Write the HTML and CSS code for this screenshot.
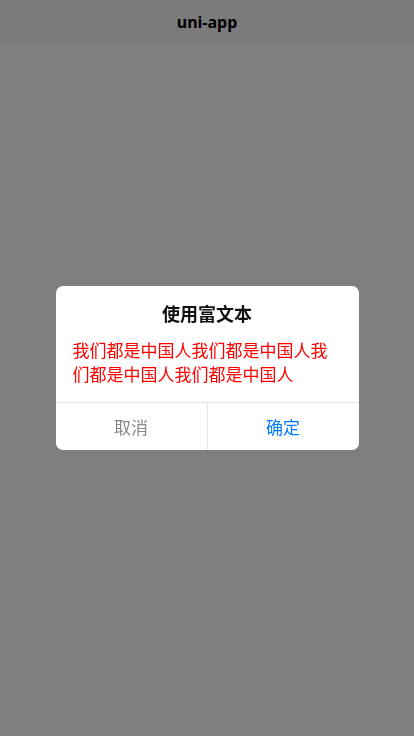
FILE: index.html
```html
<!DOCTYPE html>
<html lang="zh-CN">
<head>
<meta charset="utf-8">
<meta name="viewport" content="width=device-width, initial-scale=1">
<title>uni-app</title>
<link rel="stylesheet" href="styles.css">
</head>
<body>
<div class="page">
  <header class="navbar">uni-app</header>
  <main class="content"></main>
</div>
<div class="mask">
  <div class="modal">
    <div class="modal-title">使用富文本</div>
    <div class="modal-body">我们都是中国人我们都是中国人我们都是中国人我们都是中国人</div>
    <div class="modal-footer">
      <div class="modal-btn cancel">取消</div>
      <div class="modal-btn confirm">确定</div>
    </div>
  </div>
</div>
</body>
</html>
```
FILE: styles.css
```css
html, body {
  margin: 0;
  padding: 0;
  height: 100%;
}
body {
  font-family: "Noto Sans", "Noto Sans CJK SC", sans-serif;
  background: #ffffff;
}
.page {
  display: flex;
  flex-direction: column;
  height: 100%;
}
.navbar {
  height: 44px;
  flex: none;
  display: flex;
  align-items: center;
  justify-content: center;
  background: #f6f6f6;
  color: #000;
  font-size: 16px;
  font-weight: 700;
}
.content {
  flex: 1;
  background: #fff;
}
.mask {
  position: fixed;
  inset: 0;
  background: rgba(0, 0, 0, 0.5);
  display: flex;
  align-items: center;
  justify-content: center;
}
.modal {
  width: 303px;
  background: #fff;
  border-radius: 7px;
  overflow: hidden;
}
.modal-title {
  padding-top: 16px;
  text-align: center;
  font-family: "Noto Sans CJK SC", sans-serif;
  font-size: 18px;
  line-height: 22px;
  font-weight: 700;
  color: #111;
}
.modal-body {
  padding: 14px 17px 16px;
  font-family: "Noto Sans CJK SC", sans-serif;
  font-size: 17px;
  line-height: 24px;
  color: #ff0000;
  word-break: break-all;
}
.modal-footer {
  display: flex;
  height: 47px;
  border-top: 1px solid #e5e5e5;
}
.modal-btn {
  flex: 1;
  display: flex;
  align-items: center;
  justify-content: center;
  font-family: "Noto Sans CJK SC", sans-serif;
  font-size: 17px;
}
.cancel {
  color: #888888;
  border-right: 1px solid #e5e5e5;
}
.confirm {
  color: #007aff;
}
```
